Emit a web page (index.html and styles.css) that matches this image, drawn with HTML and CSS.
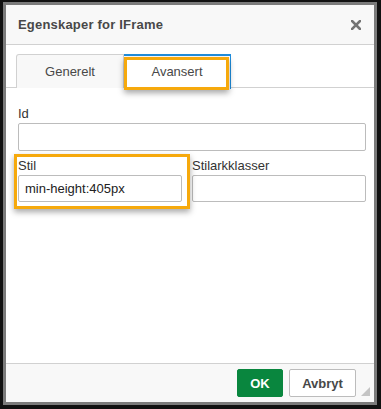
FILE: index.html
```html
<!DOCTYPE html>
<html lang="no">
<head>
    <meta charset="UTF-8">
    <meta name="viewport" content="width=device-width, initial-scale=1.0">
    <title>Egenskaper for IFrame</title>
    <link rel="stylesheet" href="styles.css">
</head>
<body>
    <div class="frame">
        <div class="dialog">
            <div class="dialog-title">
                <span>Egenskaper for IFrame</span>
                <a class="close" href="#" title="Lukk">
                    <svg width="10" height="10" viewBox="0 0 10 10">
                        <path d="M1 1 L9 9 M9 1 L1 9" stroke="#747474" stroke-width="2.6" stroke-linecap="square"/>
                    </svg>
                </a>
            </div>
            <div class="tabs">
                <a class="tab" href="#">Generelt</a>
                <a class="tab tab-selected" href="#">Avansert</a>
                <span class="mark mark-tab"></span>
            </div>
            <div class="contents">
                <div class="field">
                    <label for="id">Id</label>
                    <input type="text" id="id">
                </div>
                <div class="row">
                    <div class="field field-stil">
                        <label for="stil">Stil</label>
                        <input type="text" id="stil" value="min-height:405px">
                    </div>
                    <div class="field field-half">
                        <label for="klasser">Stilarkklasser</label>
                        <input type="text" id="klasser">
                    </div>
                    <span class="mark mark-stil"></span>
                </div>
            </div>
            <div class="footer">
                <button class="btn btn-ok">OK</button>
                <button class="btn btn-cancel">Avbryt</button>
                <span class="resize"></span>
            </div>
        </div>
    </div>
</body>
</html>
```

FILE: styles.css
```css
body {
    margin: 0;
    background-color: #111;
    font-family: "Liberation Sans", Arial, Helvetica, sans-serif;
    font-size: 13px;
    color: #484848;
    padding: 2px 4px 4px 3px;
    height: 409px;
    box-sizing: border-box;
}
.frame {
    border: 3px solid #7b7b7b;
    height: 403px;
    box-sizing: border-box;
}
.dialog {
    background-color: #fff;
    height: 100%;
    display: flex;
    flex-direction: column;
}
.dialog-title {
    height: 39px;
    line-height: 39px;
    padding-left: 12px;
    padding-right: 13px;
    background-color: #f8f8f8;
    border-bottom: 1px solid #d1d1d1;
    font-weight: bold;
    letter-spacing: 0.2px;
    display: flex;
    justify-content: space-between;
    align-items: center;
}
.close {
    display: flex;
    width: 10px;
    height: 10px;
    margin-top: 1px;
}
.tabs {
    position: relative;
    height: 43px;
    box-sizing: border-box;
    padding-top: 9px;
    padding-left: 10px;
    border-bottom: 1px solid #d1d1d1;
    display: flex;
    margin-bottom: -1px;
}
.tabs, .contents {
    flex-shrink: 0;
}
.tab {
    display: block;
    width: 108px;
    height: 34px;
    box-sizing: border-box;
    line-height: 33px;
    text-align: center;
    color: #484848;
    text-decoration: none;
    background-color: #f8f8f8;
    border: 1px solid #d1d1d1;
    border-bottom: none;
    border-top-left-radius: 3px;
}
.tab-selected {
    width: 107px;
    height: 35px;
    background-color: #fff;
    border: none;
    border-top: 2px solid #1f8ede;
    border-right: 1px solid #1f8ede;
    border-radius: 0;
    line-height: 32px;
    position: relative;
    z-index: 1;
}
.mark {
    position: absolute;
    border: 3px solid #f6a90c;
    box-shadow: 0 3px 6px rgba(0, 0, 0, 0.35);
    z-index: 2;
    pointer-events: none;
}
.mark-tab {
    left: 118px;
    top: 12px;
    width: 99px;
    height: 27px;
}
.contents {
    flex: 1;
    padding: 19px 8px 0 12px;
}
.field label {
    display: block;
    line-height: 16px;
    color: #333;
    margin-bottom: 1px;
}
.field input {
    display: block;
    width: 100%;
    height: 28px;
    box-sizing: border-box;
    border: 1px solid #bcbcbc;
    border-radius: 2px;
    padding: 0 6px;
    font-family: inherit;
    font-size: 13px;
    color: #222;
    background-color: #fff;
}
.row {
    position: relative;
    display: flex;
    gap: 10px;
    margin-top: 7px;
}
.field-stil {
    flex: 0 0 164px;
}
.field-half {
    flex: 1;
}
.row .field input {
    height: 27px;
    margin-top: 1px;
}
.mark-stil {
    left: -4px;
    top: -4px;
    width: 170px;
    height: 49px;
}
.footer {
    position: relative;
    height: 38px;
    background-color: #f8f8f8;
    border-top: 1px solid #d1d1d1;
    display: flex;
    justify-content: flex-end;
    align-items: center;
    gap: 6px;
    padding-right: 18px;
}
.btn {
    height: 28px;
    border-radius: 2px;
    font-family: inherit;
    font-size: 13px;
    font-weight: bold;
    cursor: pointer;
    padding: 0 12px;
}
.btn-ok {
    width: 46px;
    background-color: #09863e;
    border: 1px solid #09863e;
    color: #fff;
}
.btn-cancel {
    width: 67px;
    background-color: #fff;
    border: 1px solid #bcbcbc;
    color: #484848;
}
.resize {
    position: absolute;
    right: 4px;
    bottom: 6px;
    width: 0;
    height: 0;
    border-left: 9px solid transparent;
    border-bottom: 9px solid #c4c4c4;
}
```
